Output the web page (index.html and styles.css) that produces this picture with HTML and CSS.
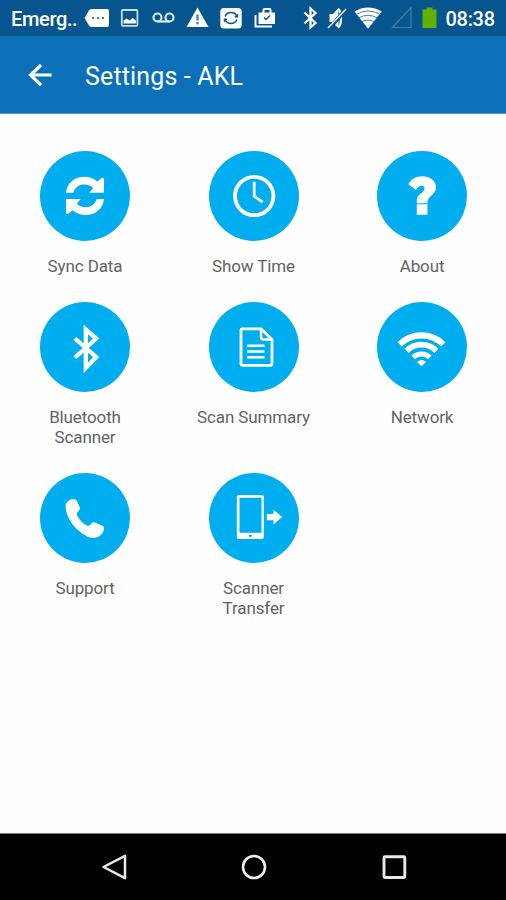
FILE: index.html
```html
<!DOCTYPE html>
<html lang="en">
<head>
<meta charset="utf-8">
<title>Settings - AKL</title>
<link rel="stylesheet" href="styles.css">
</head>
<body>
<div class="status">
  <span class="carrier">Emerg..</span>
  <svg class="more" width="26" height="36" viewBox="84 0 26 36"><path fill="#fff" d="M91.500 9H107a2 2 0 0 1 2 2v14a2 2 0 0 1-2 2H91.500Q90 27 89 25.500L84.500 18 89 10.500Q90 9 91.500 9z"/><path stroke="#07558f" stroke-width="1.600" d="M92 18h2M97 18h2M102 18h2"/></svg>
  <svg class="image" width="20" height="36" viewBox="120 0 20 36"><rect x="121.800" y="10" width="15.600" height="15.800" rx="1" fill="none" stroke="#c9dcea" stroke-width="1.800"/><path fill="#fff" d="M123.500 23.500v-3l3-2 3 2 3-2.500 3.500 2.500v3z"/></svg>
  <svg class="voicemail" width="24" height="36" viewBox="152 0 24 36"><g fill="none" stroke="#dbe9f3" stroke-width="2.200"><circle cx="157.500" cy="17.500" r="4"/><circle cx="169.500" cy="17.500" r="4"/><path d="M157.500 21.500h12"/></g></svg>
  <svg class="warning" width="23" height="36" viewBox="186 0 23 36"><path fill="#fff" d="M197.500 7.500 208.500 27h-22z"/><path stroke="#4a83ae" stroke-width="2.400" d="M197.500 14.500v6M197.500 22v2.300"/></svg>
  <svg class="rotate" width="22" height="36" viewBox="220 0 22 36"><rect x="220.300" y="8" width="21.400" height="20.500" rx="3.500" fill="#fff"/><g fill="none" stroke="#07558f" stroke-width="1.500"><path d="M225 16.500a6.500 6.500 0 0 1 12 0M237 19.500a6.500 6.500 0 0 1-12 0"/><path d="M234.800 16.800h2.700v-2.500M227.200 19.200h-2.700v2.500"/></g></svg>
  <svg class="briefcase" width="23" height="36" viewBox="254 0 23 36"><path fill="#fff" fill-rule="evenodd" d="M258.500 12.500h4V10a2 2 0 0 1 2-2h5a2 2 0 0 1 2 2v2.500h3.500V24h-16.500zM264.500 12.500h5V10h-5z"/><path fill="none" stroke="#fff" stroke-width="2" d="M255.500 15v11.500H272"/><path fill="none" stroke="#07558f" stroke-width="1.500" d="m264 17.500 2 2 4-4"/></svg>
  <svg class="bt" width="16" height="36" viewBox="302 0 16 36"><path fill="none" stroke="#fff" stroke-width="2.300" d="m304.500 12.500 11 10.500-5 4.500v-19l5 4.500-11 10.500"/></svg>
  <svg class="mute" width="22" height="36" viewBox="326 0 22 36"><path fill="#fff" d="M329.500 14h3.500l5.500-6v20l-3-2.500-2.500-3.500h-3.500z"/><path fill="none" stroke="#fff" stroke-width="2.200" d="M338 9q3 1 3 9t-3 9.500"/><path stroke="#07558f" stroke-width="4" d="m329 29 17-20"/><path stroke="#dfeaf3" stroke-width="1.600" d="m328 28 18-19"/></svg>
  <svg class="wifi" width="28" height="36" viewBox="354 0 28 36"><path fill="#fff" d="M354.500 11.500Q368 3.500 381.800 11.500L368 28.800z"/><g fill="none" stroke="#3f7fae" stroke-width="1"><path d="M356 14.500q12-7 24.500 0M358.500 18q9.500-5.500 19 0M361.500 22q6.500-4 13 0"/></g></svg>
  <svg class="signal" width="22" height="36" viewBox="391 0 22 36"><path fill="none" stroke="#4280b0" stroke-width="1.200" d="M392.500 27.500 411 7.500v20z"/></svg>
  <svg class="battery" width="15" height="36" viewBox="422 0 15 36"><path fill="#62b000" d="M422.500 9.500h4V7.500h6v2h4V28h-14z"/></svg>
  <span class="time">08:38</span>
</div>
<header class="bar">
  <svg class="back" width="26" height="26" viewBox="27 62 26 26"><path fill="none" stroke="#fff" stroke-width="3.200" d="M51.500 75H31M41 65 30.500 75 41 85.200"/></svg>
  <h1>Settings - AKL</h1>
</header>
<main class="grid">
  <div class="tile"><svg class="disc" viewBox="0 0 90 90"><g fill="#fff"><path d="M26 41.700C27 31.500 35 25.700 44.500 25.700c5 0 9.500 1.700 13 4.800l3.500-3c1.600-1.100 3-.8 3 .8v13.400H49.300l4-4.700c-5.800-5.700-17.300-4.700-20 4.700z"/><path transform="rotate(180 45 44.900)" d="M26 41.700C27 31.500 35 25.700 44.500 25.700c5 0 9.500 1.700 13 4.800l3.500-3c1.600-1.100 3-.8 3 .8v13.400H49.300l4-4.700c-5.800-5.700-17.300-4.700-20 4.700z"/></g></svg><p>Sync Data</p></div>
  <div class="tile"><svg class="disc" viewBox="0 0 90 90"><g fill="none" stroke="#fff"><circle cx="45.200" cy="45" r="19.200" stroke-width="3.800"/><path stroke-width="2.800" d="M45.200 30.700v14.500l8.500 6"/></g></svg><p>Show Time</p></div>
  <div class="tile"><svg class="disc" viewBox="0 0 90 90"><path fill="#fff" d="M31.300 33.300C34 28 39 25.300 45 25.300c8 0 14 4.500 14 11.200 0 7.500-8.500 8.500-8.500 14.500v1.200H39.800v-3c0-6.800 7.700-7 7.700-11.700 0-3.800-5.500-4-8.500 1.500z"/><path fill="#fff" d="M39.800 53.300h10.700v10.400H39.800z"/></svg><p>About</p></div>
  <div class="tile"><svg class="disc" viewBox="0 0 90 90"><path fill="none" stroke="#fff" stroke-width="4.300" d="M35 36.500 56.200 55.200 45.800 66V27.500L56.200 36.500 35 55.500"/></svg><p>Bluetooth<br>Scanner</p></div>
  <div class="tile"><svg class="disc" viewBox="0 0 90 90"><g fill="none" stroke="#fff"><path stroke-width="2.800" stroke-linejoin="round" d="M33 26.800H52L63 37.500V61.500a1.800 1.800 0 0 1-1.800 1.800H33.800A1.800 1.800 0 0 1 32 61.500V27.800a1 1 0 0 1 1-1z"/><path stroke-width="2.500" d="M52 27v8a2.500 2.500 0 0 0 2.500 2.500H63"/><path stroke-width="2.600" d="M38.200 43.800h17.300M38.200 49.500h17.300M38.200 55.200h17.300"/></g></svg><p>Scan Summary</p></div>
  <div class="tile"><svg class="disc" viewBox="0 0 90 90"><g fill="none" stroke="#fff"><path stroke-width="6.200" d="M22.700 42.400A31 31 0 0 1 66.300 42.400"/><path stroke-width="5.800" d="M29.600 48.900A21 21 0 0 1 59.400 48.900"/><path stroke-width="5" d="M36.200 55.400A11.800 11.800 0 0 1 52.800 55.400"/></g><path fill="#fff" d="M40 60Q44.500 56 49 60L44.500 64.300z"/></svg><p>Network</p></div>
  <div class="tile"><svg class="disc" viewBox="0 0 90 90"><path fill="#fff" d="M25.700 32.500c.3-3 2.800-5.500 6.500-6.200 2.500-.4 4 .2 4.800 1.700l2.800 6.500c.6 1.500-.2 2.400-1.500 3.700-2 1.600-1.700 3.800 0 6.300 2.500 3.500 4.500 5.500 8.500 8 1.700.7 2.700.3 3.700-1 1.300-1.600 2.700-2.600 4.500-2l7 3c2 1 2.500 2.500 1.800 4.500-1.300 5-6 8-11 8C45 65 25.200 50 25.700 32.500z"/></svg><p>Support</p></div>
  <div class="tile"><svg class="disc" viewBox="0 0 90 90"><path fill="#fff" fill-rule="evenodd" d="M29.800 22h23a2 2 0 0 1 2 2v40a2 2 0 0 1-2 2h-23a2 2 0 0 1-2-2V24a2 2 0 0 1 2-2zM30.500 24.800v35h22v-35z"/><path fill="#00aeef" d="M39.800 62h3v1.800h-3z"/><path fill="#fff" d="M57.800 41h6.700v-4.300l8.700 7.400-8.700 7.300v-4.200h-6.700z"/></svg><p>Scanner<br>Transfer</p></div>
</main>
<nav class="nav">
  <svg viewBox="0 0 30 30"><path fill="none" stroke="#e8e8e8" stroke-width="2.500" stroke-linejoin="round" d="M4.500 15 26 3.800v22.400z"/></svg>
  <svg viewBox="0 0 30 30"><circle cx="15" cy="15" r="11" fill="none" stroke="#f0f0f0" stroke-width="2.600"/></svg>
  <svg viewBox="0 0 30 30"><rect x="5" y="4.700" width="20.800" height="20.800" rx="1" fill="none" stroke="#e8e8e8" stroke-width="2.900"/></svg>
</nav>
</body>
</html>
```
FILE: styles.css
```css
* { box-sizing: border-box; }
body {
  margin: 0;
  width: 506px;
  height: 900px;
  overflow: hidden;
  display: flex;
  flex-direction: column;
  background: #fefefe;
  font-family: Roboto, "Liberation Sans", sans-serif;
}
.status {
  height: 36px;
  flex: none;
  display: flex;
  align-items: center;
  background: #07558f;
  color: #fff;
  font-size: 20px;
  font-weight: 500;
  white-space: nowrap;
}
.status svg { flex: none; }
.carrier { width: 73px; padding: 2px 0 0 11px; letter-spacing: -0.35px; flex: none; }
.more { margin-left: 11px; }
.image { margin-left: 10px; }
.voicemail { margin-left: 12px; }
.warning { margin-left: 10px; }
.rotate { margin-left: 11px; }
.briefcase { margin-left: 12px; }
.bt { margin-left: 25px; }
.mute { margin-left: 8px; }
.wifi { margin-left: 6px; }
.signal { margin-left: 9px; }
.battery { margin-left: 9px; }
.time { margin-left: 8.5px; padding-top: 2px; letter-spacing: -0.3px; }
.bar {
  height: 78px;
  flex: none;
  display: flex;
  align-items: center;
  padding-left: 27px;
  background: #0b70b8;
  border-bottom: 1px solid #5298cb;
}
.bar h1 {
  margin: 3px 0 0 32px;
  color: #fff;
  font-size: 25px;
  font-weight: 400;
  letter-spacing: 0.15px;
  white-space: nowrap;
}
.grid {
  flex: 1;
  display: grid;
  grid-template-columns: repeat(3, 168.5px);
  align-content: start;
  row-gap: 26px;
  padding: 37px 0 0 0.75px;
}
.tile { display: flex; flex-direction: column; align-items: center; }
.disc { width: 90px; height: 90px; border-radius: 50%; background: #00aeef; }
.tile p {
  margin: 15px 0 0;
  font-size: 17px;
  line-height: 20px;
  letter-spacing: -0.12px;
  text-align: center;
  color: #626262;
  white-space: nowrap;
}
.nav {
  height: 67px;
  flex: none;
  display: flex;
  justify-content: center;
  align-items: center;
  gap: 110px;
  padding-left: 1px;
  background: #000;
  border-top: 1px solid #777;
}
.nav svg { width: 30px; height: 30px; }
```
